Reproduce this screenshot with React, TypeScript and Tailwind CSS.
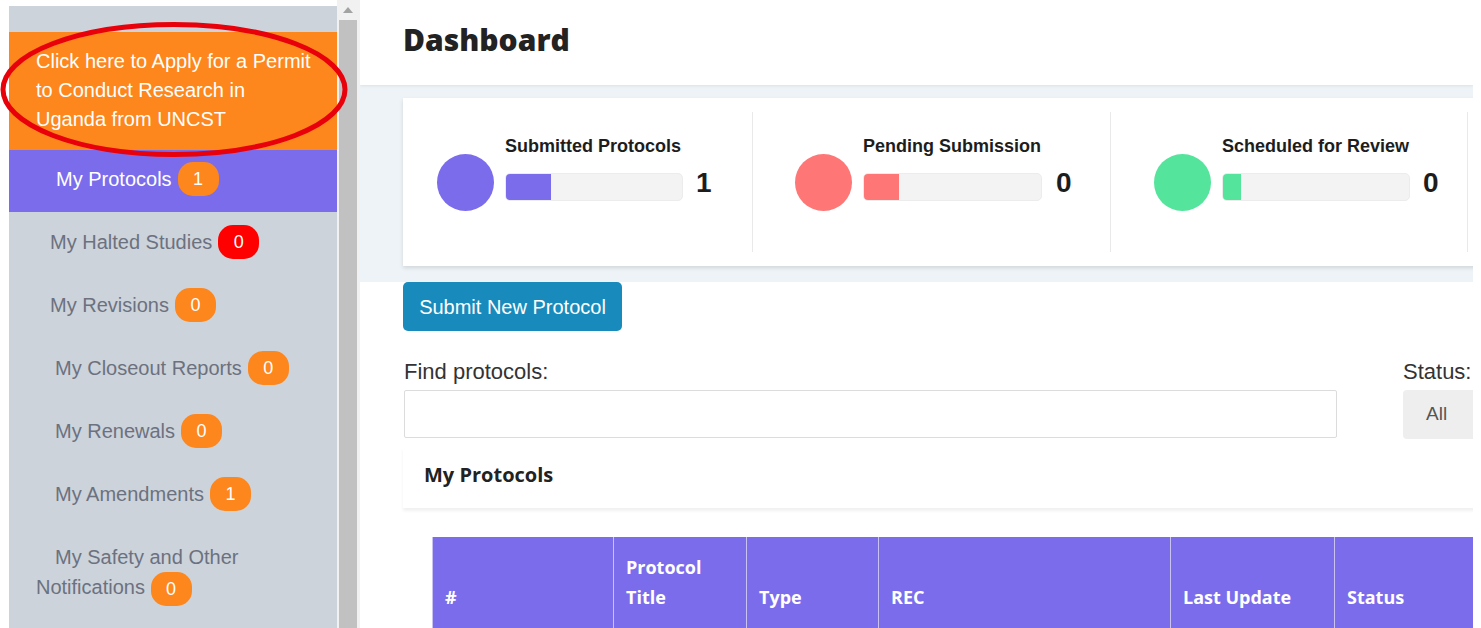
import React from "react";

type NavItem = {
  label: string;
  count: number;
  pad: string;
  badge: string;
  active?: boolean;
};

const navItems: NavItem[] = [
  { label: "My Protocols", count: 1, pad: "pl-[47px]", badge: "bg-[#fd861d]", active: true },
  { label: "My Halted Studies", count: 0, pad: "pl-[41px]", badge: "bg-[#ff0000]" },
  { label: "My Revisions", count: 0, pad: "pl-[41px]", badge: "bg-[#fd861d]" },
  { label: "My Closeout Reports", count: 0, pad: "pl-[46px]", badge: "bg-[#fd861d]" },
  { label: "My Renewals", count: 0, pad: "pl-[46px]", badge: "bg-[#fd861d]" },
  { label: "My Amendments", count: 1, pad: "pl-[46px]", badge: "bg-[#fd861d]" },
];

const stats = [
  { label: "Submitted Protocols", value: 1, color: "bg-[#7b6cec]", col: "w-[350px] pl-[34px]", bar: "w-[178px]", fill: "w-[45px]", gap: "ml-[13px]" },
  { label: "Pending Submission", value: 0, color: "bg-[#fe7676]", col: "w-[358px] pl-[42px]", bar: "w-[179px]", fill: "w-[35px]", gap: "ml-[14px]" },
  { label: "Scheduled for Review", value: 0, color: "bg-[#55e49b]", col: "w-[357px] pl-[43px]", bar: "w-[188px]", fill: "w-[18px]", gap: "ml-[13px]" },
];

const columns = [
  { title: "#", w: "w-[181px]" },
  { title: "Protocol Title", w: "w-[133px]" },
  { title: "Type", w: "w-[132px]" },
  { title: "REC", w: "w-[292px]" },
  { title: "Last Update", w: "w-[164px]" },
  { title: "Status", w: "w-[160px]" },
];

const Badge: React.FC<{ value: number; color: string }> = ({ value, color }) => (
  <span
    className={`inline-flex h-[34px] w-[41px] items-center justify-center rounded-[15px] align-middle indent-0 text-[18px] leading-none text-white ${color}`}
  >
    {value}
  </span>
);

const Sidebar: React.FC = () => (
  <div className="flex h-full shrink-0">
    <div className="w-[9px] bg-white" />
    <div className="flex flex-col bg-white pt-[6px]">
      <div className="flex h-full w-[328px] flex-col bg-[#cdd3da] text-[20px] text-[#6c7180]">
        <div className="h-[26px]" />
        <a className="block bg-[#fd861d] pb-[16px] pl-[27px] pr-[21px] pt-[15px] leading-[29px] text-white">
          Click here to Apply for a Permit to Conduct Research in Uganda from UNCST
        </a>
        {navItems.map((item) => (
          <div
            key={item.label}
            className={`flex items-center pb-[4px] ${item.pad} ${
              item.active ? "h-[62px] bg-[#7b6cec] text-white" : "h-[63px]"
            }`}
          >
            <span>{item.label}</span>
            <span className="ml-[6px]">
              <Badge value={item.count} color={item.badge} />
            </span>
          </div>
        ))}
        <div className="pl-[27px] pr-[10px] pt-[15px] indent-[19px] leading-[30px]">
          My Safety and Other Notifications <Badge value={0} color="bg-[#fd861d]" />
        </div>
      </div>
    </div>
    {/* scrollbar */}
    <div className="flex w-[23px] flex-col bg-[#f1f1f1] pl-[2px] pr-[3px]">
      <div className="flex h-[20px] items-start justify-center pt-[7px]">
        <svg width="10" height="6" viewBox="0 0 10 6">
          <path d="M0 6 L5 0 L10 6 Z" fill="#a3a3a3" />
        </svg>
      </div>
      <div className="flex-1 bg-[#c1c1c1]" />
    </div>
  </div>
);

const StatsCard: React.FC = () => (
  <div className="flex h-[168px] w-[1200px] shrink-0 bg-white py-[14px] shadow-[0_2px_4px_rgba(0,0,0,0.12)]">
    {stats.map((s) => (
      <div key={s.label} className={`flex h-full items-start border-r border-[#e9e9e9] ${s.col}`}>
        <div className={`mt-[42px] h-[57px] w-[57px] shrink-0 rounded-full ${s.color}`} />
        <div className="ml-[11px] mt-[24px]">
          <div className="text-[18px] font-bold leading-[20px] text-[#1d1d1d]">{s.label}</div>
          <div className="mt-[17px] flex items-start">
            <div className={`h-[28px] overflow-hidden rounded-[5px] border border-[#ececec] bg-[#f3f3f3] ${s.bar}`}>
              <div className={`h-full ${s.color} ${s.fill}`} />
            </div>
            <div className={`-mt-[4px] text-[28px] font-bold leading-none text-[#1d1d1d] ${s.gap}`}>
              {s.value}
            </div>
          </div>
        </div>
      </div>
    ))}
    <div className="w-[100px]" />
  </div>
);

export default function App() {
  return (
    <div className="relative flex h-[628px] w-[1481px] overflow-hidden bg-white font-['Liberation_Sans',Arial,sans-serif]">
      <Sidebar />

      <main className="flex w-[1113px] shrink-0 flex-col overflow-hidden">
        <header className="relative z-10 flex h-[85px] shrink-0 items-center pb-[6px] pl-[43px] shadow-[0_1px_3px_rgba(0,0,0,0.08)]">
          <h1 className="font-['Open_Sans',sans-serif] text-[30px] font-extrabold text-[#222]">Dashboard</h1>
        </header>

        <section className="h-[197px] shrink-0 bg-[#edf3f7] pl-[43px] pt-[13px]">
          <StatsCard />
        </section>

        <div className="pl-[43px]">
          <button className="h-[49px] w-[219px] rounded-[5px] bg-[#188bbc] text-[20px] text-white">
            Submit New Protocol
          </button>

          <div className="mt-[28px] flex w-[1200px] items-start">
            <label className="block w-[934px] pl-[1px]">
              <span className="block text-[22px] leading-[26px] text-[#333]">Find protocols:</span>
              <input className="mt-[5px] block h-[48px] w-[933px] rounded-[2px] border border-[#dcdcdc] bg-white" />
            </label>
            <div className="ml-[66px]">
              <span className="block text-[22px] leading-[26px] text-[#333]">Status:</span>
              <div className="mt-[5px] flex h-[49px] w-[120px] items-center rounded-[4px] bg-[#eeeeee] pl-[23px] text-[19px] text-[#555]">
                All
              </div>
            </div>
          </div>

          <div className="mt-[8px] flex h-[61px] w-[1200px] items-center bg-white pb-[6px] pl-[21px] shadow-[0_3px_3px_rgba(0,0,0,0.06)]">
            <h2 className="font-['Open_Sans',sans-serif] text-[20px] font-bold text-[#222]">My Protocols</h2>
          </div>

          <div className="ml-[29px] mt-[29px] flex h-[100px] w-[1200px] border-l border-[#c9c3f3] bg-[#7b6cec] font-['Open_Sans',sans-serif] text-[18px] font-bold text-white">
            {columns.map((c) => (
              <div
                key={c.title}
                className={`flex h-full items-end border-r border-[#c9c3f3] pb-[25px] pl-[12px] pr-[40px] leading-[30px] ${c.w}`}
              >
                {c.title}
              </div>
            ))}
          </div>
        </div>
      </main>

      <div className="w-[8px] shrink-0 bg-white" />

      {/* hand-drawn highlight round the permit link */}
      <svg className="pointer-events-none absolute left-0 top-0" width="352" height="165">
        <ellipse cx="174" cy="89.5" rx="171" ry="65" fill="none" stroke="#e8000b" strokeWidth="5" />
      </svg>
    </div>
  );
}
